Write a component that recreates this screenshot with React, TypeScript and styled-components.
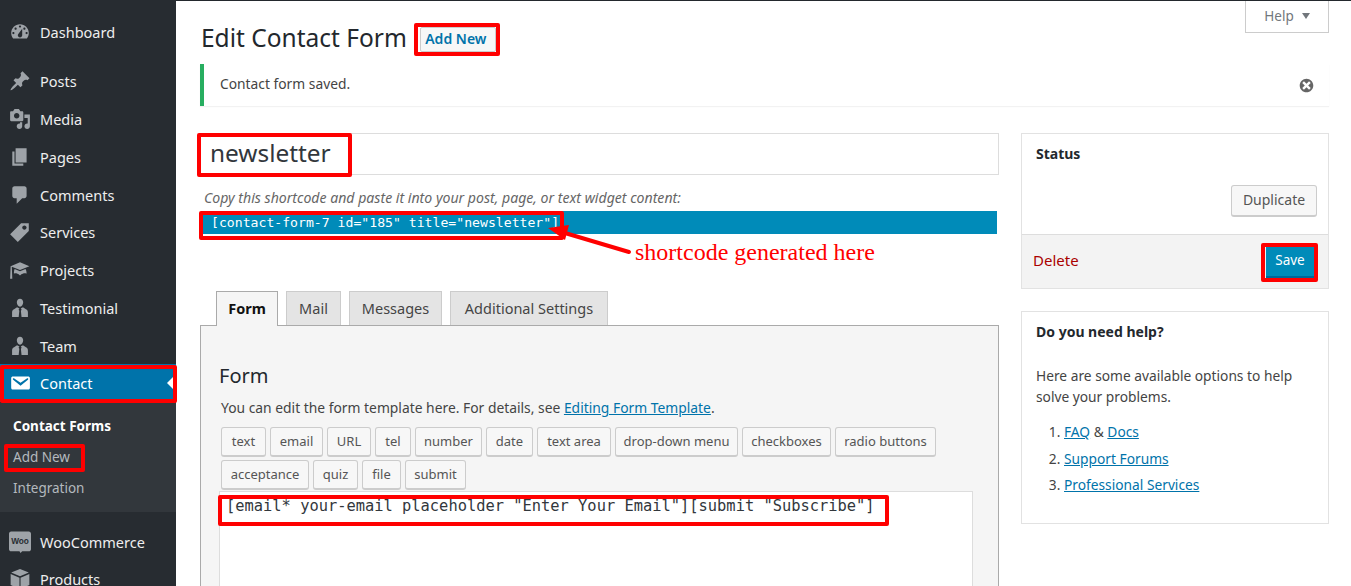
import { FC } from "react";
import styled, { createGlobalStyle } from "styled-components";

const UI_FONT = `"Noto Sans", "Open Sans", sans-serif`;
const MONO_FONT = `"DejaVu Sans Mono", "Liberation Mono", monospace`;

const GlobalStyle = createGlobalStyle`
  html, body {
    margin: 0;
    height: 100%;
    overflow: hidden;
    background: #fff;
  }
  * { box-sizing: border-box; }
  body {
    font-family: ${UI_FONT};
    font-size: 14px;
    color: #444;
  }
`;

const Page = styled.div`
  position: relative;
  display: flex;
  width: 1351px;
  height: 586px;
  overflow: hidden;
`;

/* sidebar */
const Sidebar = styled.nav`
  flex: 0 0 176px;
  height: 586px;
  overflow: hidden;
  background: #272c31;
  padding-top: 13px;
`;

const MenuItem = styled.div<{ $active?: boolean; $gap?: number }>`
  display: flex;
  align-items: center;
  height: 37.75px;
  padding-left: 9px;
  margin-top: ${(p) => p.$gap ?? 0}px;
  font-size: 14.5px;
  color: ${(p) => (p.$active ? "#fff" : "#eee")};
  background: ${(p) => (p.$active ? "#0073aa" : "transparent")};
  position: relative;
`;

const MenuLabel = styled.span`
  margin-left: 9px;
`;

const MenuIcon = styled.svg<{ $active?: boolean }>`
  width: 22px;
  height: 22px;
  flex: none;
  fill: ${(p) => (p.$active ? "#fff" : "#9ea3a8")};
`;

const ActiveCaret = styled.span`
  position: absolute;
  right: 3px;
  top: 50%;
  margin-top: -6px;
  border: 6px solid transparent;
  border-right-color: #fff;
  border-left-width: 0;
`;

const Submenu = styled.div`
  background: #32373c;
  height: 109px;
  margin-top: 1px;
  padding: 8px 0 0 13px;
  margin-bottom: 11px;
`;

const SubItem = styled.div<{ $current?: boolean }>`
  height: 31px;
  line-height: 31px;
  font-size: 13.5px;
  font-weight: ${(p) => (p.$current ? 700 : 400)};
  color: ${(p) => (p.$current ? "#fff" : "#b4b9be")};
`;

/* main column */
const Main = styled.main`
  flex: 1;
  border-top: 1px solid #23282d;
  padding: 0 22px 0 24px;
`;

const HeaderRow = styled.div`
  display: flex;
  align-items: flex-start;
  height: 63px;
`;

const Heading = styled.h1`
  margin: 21px 0 0 1px;
  font-size: 24.5px;
  line-height: 32px;
  font-weight: 400;
  color: #23282d;
`;

const AddNewButton = styled.a`
  margin: 26px 0 0 13px;
  width: 76px;
  height: 25px;
  padding-right: 4px;
  line-height: 21px;
  text-align: center;
  white-space: nowrap;
  font-size: 14px;
  font-weight: 600;
  color: #0073aa;
  background: #f7f7f7;
  border: 1px solid #ccc;
  border-radius: 2px;
`;

const HelpTab = styled.div`
  margin-left: auto;
  width: 84px;
  height: 32px;
  padding-bottom: 2px;
  display: flex;
  align-items: center;
  justify-content: center;
  gap: 8px;
  font-size: 13.5px;
  color: #72777c;
  border: 1px solid #ccc;
  border-top: 0;
`;

const HelpCaret = styled.span`
  border-style: solid;
  border-width: 6px 4px 0;
  border-color: #72777c transparent transparent;
`;

const Notice = styled.div`
  display: flex;
  align-items: center;
  justify-content: space-between;
  height: 42px;
  padding: 0 14px 0 16px;
  background: #fff;
  border-left: 4px solid #27ae60;
  box-shadow: 0 1px 1px rgba(0, 0, 0, 0.05);
`;

const NoticeText = styled.span`
  margin-bottom: 3px;
  font-size: 13.8px;
  color: #444;
`;

const DismissIcon = styled.svg`
  width: 17px;
  height: 17px;
  fill: #666;
`;

const Columns = styled.div`
  display: flex;
  gap: 22px;
  margin-top: 27px;
`;

const LeftColumn = styled.div`
  flex: 0 0 799px;
`;

const RightColumn = styled.div`
  flex: 0 0 308px;
`;

const TitleInput = styled.div`
  height: 42px;
  padding-left: 9px;
  line-height: 37px;
  font-size: 24.4px;
  color: #32373c;
  background: #fff;
  border: 1px solid #ddd;
`;

const ShortcodeHint = styled.p`
  margin: 13px 0 0 4px;
  height: 22px;
  line-height: 20px;
  font-size: 14.1px;
  font-style: italic;
  color: #666;
`;

const ShortcodeBar = styled.div`
  margin: 1px 2px 0;
  height: 23px;
  padding-left: 9px;
  line-height: 24px;
  font-family: ${MONO_FONT};
  font-size: 13.15px;
  color: #fff;
  background: #008bb9;
  white-space: pre;
`;

const Tabs = styled.div`
  display: flex;
  align-items: flex-start;
  gap: 8px;
  margin-top: 57px;
  padding-left: 16px;
  position: relative;
  z-index: 1;
`;

const Tab = styled.div<{ $active?: boolean; $width: number }>`
  width: ${(p) => p.$width}px;
  height: ${(p) => (p.$active ? 35 : 34)}px;
  line-height: 32px;
  text-align: center;
  font-size: 14.5px;
  font-weight: ${(p) => (p.$active ? 700 : 400)};
  color: ${(p) => (p.$active ? "#111" : "#444")};
  background: ${(p) => (p.$active ? "#f5f5f5" : "#e4e4e4")};
  border: 1px solid ${(p) => (p.$active ? "#aaa" : "#ccc")};
  border-bottom: 0;
`;

const Panel = styled.div`
  height: 300px;
  margin-top: -1px;
  padding: 36px 25px 0 18px;
  background: #f5f5f5;
  border: 1px solid #aaa;
`;

const PanelTitle = styled.h2`
  margin: 0;
  font-size: 20px;
  line-height: 28px;
  font-weight: 400;
  color: #23282d;
`;

const PanelText = styled.p`
  margin: 8px 0 0 2px;
  font-size: 13.85px;
  line-height: 20px;
  color: #444;
`;

const TextLink = styled.a`
  color: #0073aa;
  text-decoration: underline;
`;

const TagRow = styled.div`
  display: flex;
  flex-wrap: wrap;
  gap: 3px 4px;
  margin: 9px 0 0 2px;
  width: 730px;
`;

const TagButton = styled.span<{ $width: number }>`
  width: ${(p) => p.$width}px;
  height: 30px;
  line-height: 27px;
  text-align: center;
  font-size: 13px;
  color: #555;
  background: #f7f7f7;
  border: 1px solid #ccc;
  border-bottom-width: 2px;
  border-radius: 3px;
`;

const CodeArea = styled.div`
  height: 120px;
  margin-top: 1px;
  padding: 2px 0 0 6px;
  font-family: ${MONO_FONT};
  font-size: 15.4px;
  line-height: 24px;
  color: #32373c;
  background: #fff;
  border: 1px solid #ddd;
  white-space: pre;
`;

/* side boxes */
const SideBox = styled.section`
  background: #fff;
  border: 1px solid #e2e2e2;
  margin-bottom: 22px;
`;

const BoxTitle = styled.h3`
  margin: 0;
  font-size: 14px;
  line-height: 20px;
  font-weight: 700;
  color: #23282d;
`;

const StatusBody = styled.div`
  height: 100px;
  padding: 10px 11px 0 14px;
`;

const DuplicateRow = styled.div`
  display: flex;
  justify-content: flex-end;
  margin-top: 21px;
`;

const DuplicateButton = styled.span`
  width: 86px;
  height: 32px;
  line-height: 27px;
  text-align: center;
  font-size: 14px;
  color: #555;
  background: #f7f7f7;
  border: 1px solid #ccc;
  border-bottom-width: 2px;
  border-radius: 3px;
`;

const StatusFooter = styled.div`
  display: flex;
  align-items: center;
  justify-content: space-between;
  height: 54px;
  padding: 0 14px 0 11px;
  background: #f3f3f3;
  border-top: 1px solid #ddd;
`;

const DeleteLink = styled.span`
  margin-bottom: 3px;
  font-size: 15px;
  color: #a00;
`;

const SaveButton = styled.span`
  width: 48px;
  height: 33px;
  line-height: 31px;
  text-align: center;
  font-size: 13.5px;
  color: #fff;
  background: #008bb9;
  border-bottom: 2px solid #006799;
`;

const HelpBody = styled.div`
  height: 211px;
  padding: 10px 14px 0;
`;

const HelpText = styled.p`
  margin: 23px 0 0;
  font-size: 13.75px;
  line-height: 21px;
  color: #444;
`;

const HelpList = styled.ol`
  margin: 15px 0 0;
  padding-left: 28px;
  font-size: 13.75px;
  line-height: 20px;

  li {
    margin-bottom: 6.5px;
  }
`;

/* red annotations drawn on top of the screenshot */
const RedFrame = styled.div<{ $x: number; $y: number; $w: number; $h: number }>`
  position: absolute;
  left: ${(p) => p.$x}px;
  top: ${(p) => p.$y}px;
  width: ${(p) => p.$w}px;
  height: ${(p) => p.$h}px;
  border: 4px solid #f00;
  border-radius: 2px;
  pointer-events: none;
`;

const ArrowSvg = styled.svg`
  position: absolute;
  left: 545px;
  top: 220px;
  width: 95px;
  height: 40px;
`;

const CalloutText = styled.span`
  position: absolute;
  left: 635px;
  top: 238px;
  font-family: "Liberation Serif", serif;
  font-size: 24px;
  line-height: 28px;
  color: #f00;
  white-space: nowrap;
`;

const WooText = styled.text`
  font-family: "Liberation Sans", sans-serif;
  font-size: 7.5px;
  font-weight: 700;
  fill: #272c31;
`;

type IconProps = { d: string; active?: boolean };

const PathIcon: FC<IconProps> = ({ d, active }) => (
  <MenuIcon viewBox="0 0 20 20" $active={active}>
    <path d={d} fillRule="evenodd" />
  </MenuIcon>
);

const ICONS = {
  dashboard:
    "M3.76 16h12.48c1.1-1.37 1.76-3.11 1.76-5 0-4.42-3.58-8-8-8s-8 3.58-8 8c0 1.89.66 3.63 1.76 5zM10 4c.55 0 1 .45 1 1s-.45 1-1 1-1-.45-1-1 .45-1 1-1zM6 6c.55 0 1 .45 1 1s-.45 1-1 1-1-.45-1-1 .45-1 1-1zm8 0c.55 0 1 .45 1 1s-.45 1-1 1-1-.45-1-1 .45-1 1-1zm-5.37 5.55L12 7v6c0 1.1-.9 2-2 2s-2-.9-2-2c0-.57.24-1.08.63-1.45zM4 10c.55 0 1 .45 1 1s-.45 1-1 1-1-.45-1-1 .45-1 1-1zm12 0c.55 0 1 .45 1 1s-.45 1-1 1-1-.45-1-1 .45-1 1-1z",
  pin: "M10.44 3.02l1.82-1.82 6.36 6.35-1.83 1.82c-1.05-.68-2.48-.57-3.41.36l-.75.75c-.92.93-1.04 2.35-.35 3.41l-1.83 1.82-2.41-2.41-2.8 2.79c-.42.42-3.38 2.71-3.8 2.29s1.86-3.39 2.28-3.81l2.79-2.79L4.1 9.36l1.83-1.82c1.05.69 2.48.57 3.4-.36l.75-.75c.93-.92 1.05-2.35.36-3.41z",
  media:
    "M13 11V4c0-.55-.45-1-1-1h-1.67L9 1H5L3.67 3H2c-.55 0-1 .45-1 1v7c0 .55.45 1 1 1h10c.55 0 1-.45 1-1zM7 4.5c1.38 0 2.5 1.12 2.5 2.5S8.38 9.5 7 9.5 4.5 8.38 4.5 7 5.62 4.5 7 4.5zM14 6h5v10.5c0 1.38-1.12 2.5-2.5 2.5S14 17.88 14 16.5s1.12-2.5 2.5-2.5c.17 0 .34.02.5.05V9h-3V6zm-4 8.05V13h2v3.5c0 1.38-1.12 2.5-2.5 2.5S7 17.88 7 16.5 8.12 14 9.5 14c.17 0 .34.02.5.05z",
  pages: "M6 15V2h10v13H6zm-1 1h8v2H3V5h2v11z",
  comments:
    "M5 2h9c1.1 0 2 .9 2 2v7c0 1.1-.9 2-2 2h-2l-5 5v-5H5c-1.1 0-2-.9-2-2V4c0-1.1.9-2 2-2z",
  tag: "M11 2h7v7L8 19l-7-7zm3 6c1.1 0 2-.9 2-2s-.9-2-2-2-2 .9-2 2 .9 2 2 2z",
  learn:
    "M10 10L2.54 7.02 3 18H1l.48-11.41L10 3l8.52 3.59zm0 1.2l5-2.1c.7 1 1 2.5 1 4.1 0 0-3-1.2-6 1.8-3-3-5.5-1.8-5.5-1.8-.1-1.6.2-3.1.6-4.1z",
  person:
    "M10 1.500c1.700 0 2.900 1.400 2.900 3.300S11.700 8.900 10 8.900 7.100 6.700 7.100 4.800 8.300 1.500 10 1.500zM7.300 9.400l2.200 1-.8 1.100.7 1-.6 5.700H2.800v-4c0-1.300.5-2.400 1.800-3zM12.700 9.400l2.700 1.800c1.300.6 1.800 1.700 1.800 3v4h-5.800l-.6-5.700.7-1-.8-1.100z",
  email:
    "M3.87 4h13.25C18.37 4 19 4.59 19 5.79v8.42c0 1.19-.63 1.79-1.88 1.79H3.87c-1.25 0-1.88-.6-1.88-1.79V5.79c0-1.2.63-1.79 1.88-1.79zm6.62 8.6l6.74-5.53c.24-.2.43-.66.13-1.07-.29-.41-.82-.42-1.17-.17l-5.7 3.86L4.8 5.83c-.35-.25-.88-.24-1.17.17-.3.41-.11.87.13 1.07z",
  box: "M10 1l8 3.200-8 3.300-8-3.300zM1.500 5.500l8 3.300V19l-8-3.500zM18.500 5.500V15.500l-8 3.500V8.800z",
};

const WooIcon: FC = () => (
  <MenuIcon viewBox="0 0 20 20">
    <path d="M2 .5h16c1.100 0 2 .9 2 2v14c0 1.100-.9 2-2 2h-6l-1.500 1.500-1-1.500H2c-1.100 0-2-.9-2-2v-14c0-1.100.9-2 2-2z" />
    <WooText x="10" y="12" textAnchor="middle">
      Woo
    </WooText>
  </MenuIcon>
);

type TagItem = { label: string; width: number };

const TAGS: TagItem[] = [
  { label: "text", width: 45 },
  { label: "email", width: 53 },
  { label: "URL", width: 44 },
  { label: "tel", width: 36 },
  { label: "number", width: 67 },
  { label: "date", width: 47 },
  { label: "text area", width: 74 },
  { label: "drop-down menu", width: 123 },
  { label: "checkboxes", width: 89 },
  { label: "radio buttons", width: 101 },
  { label: "acceptance", width: 88 },
  { label: "quiz", width: 45 },
  { label: "file", width: 39 },
  { label: "submit", width: 61 },
];

const App: FC = () => {
  return (
    <Page>
      <GlobalStyle />
      <Sidebar>
        <MenuItem>
          <PathIcon d={ICONS.dashboard} />
          <MenuLabel>Dashboard</MenuLabel>
        </MenuItem>
        <MenuItem $gap={11.7}>
          <PathIcon d={ICONS.pin} />
          <MenuLabel>Posts</MenuLabel>
        </MenuItem>
        <MenuItem>
          <PathIcon d={ICONS.media} />
          <MenuLabel>Media</MenuLabel>
        </MenuItem>
        <MenuItem>
          <PathIcon d={ICONS.pages} />
          <MenuLabel>Pages</MenuLabel>
        </MenuItem>
        <MenuItem>
          <PathIcon d={ICONS.comments} />
          <MenuLabel>Comments</MenuLabel>
        </MenuItem>
        <MenuItem>
          <PathIcon d={ICONS.tag} />
          <MenuLabel>Services</MenuLabel>
        </MenuItem>
        <MenuItem>
          <PathIcon d={ICONS.learn} />
          <MenuLabel>Projects</MenuLabel>
        </MenuItem>
        <MenuItem>
          <PathIcon d={ICONS.person} />
          <MenuLabel>Testimonial</MenuLabel>
        </MenuItem>
        <MenuItem>
          <PathIcon d={ICONS.person} />
          <MenuLabel>Team</MenuLabel>
        </MenuItem>
        <MenuItem $active>
          <PathIcon d={ICONS.email} active />
          <MenuLabel>Contact</MenuLabel>
          <ActiveCaret />
        </MenuItem>
        <Submenu>
          <SubItem $current>Contact Forms</SubItem>
          <SubItem>Add New</SubItem>
          <SubItem>Integration</SubItem>
        </Submenu>
        <MenuItem>
          <WooIcon />
          <MenuLabel>WooCommerce</MenuLabel>
        </MenuItem>
        <MenuItem $gap={-1}>
          <PathIcon d={ICONS.box} />
          <MenuLabel>Products</MenuLabel>
        </MenuItem>
      </Sidebar>

      <Main>
        <HeaderRow>
          <Heading>Edit Contact Form</Heading>
          <AddNewButton>Add New</AddNewButton>
          <HelpTab>
            Help
            <HelpCaret />
          </HelpTab>
        </HeaderRow>

        <Notice>
          <NoticeText>Contact form saved.</NoticeText>
          <DismissIcon viewBox="0 0 20 20">
            <path d="M10 2c4.420 0 8 3.580 8 8s-3.580 8-8 8-8-3.580-8-8 3.580-8 8-8zm5 11l-3-3 3-3-2-2-3 3-3-3-2 2 3 3-3 3 2 2 3-3 3 3z" />
          </DismissIcon>
        </Notice>

        <Columns>
          <LeftColumn>
            <TitleInput>newsletter</TitleInput>
            <ShortcodeHint>
              Copy this shortcode and paste it into your post, page, or text widget content:
            </ShortcodeHint>
            <ShortcodeBar>[contact-form-7 id="185" title="newsletter"]</ShortcodeBar>

            <Tabs>
              <Tab $active $width={62}>
                Form
              </Tab>
              <Tab $width={55}>Mail</Tab>
              <Tab $width={93}>Messages</Tab>
              <Tab $width={158}>Additional Settings</Tab>
            </Tabs>
            <Panel>
              <PanelTitle>Form</PanelTitle>
              <PanelText>
                You can edit the form template here. For details, see{" "}
                <TextLink>Editing Form Template</TextLink>.
              </PanelText>
              <TagRow>
                {TAGS.map((tag) => (
                  <TagButton key={tag.label} $width={tag.width}>
                    {tag.label}
                  </TagButton>
                ))}
              </TagRow>
              <CodeArea>[email* your-email placeholder "Enter Your Email"][submit "Subscribe"]</CodeArea>
            </Panel>
          </LeftColumn>

          <RightColumn>
            <SideBox>
              <StatusBody>
                <BoxTitle>Status</BoxTitle>
                <DuplicateRow>
                  <DuplicateButton>Duplicate</DuplicateButton>
                </DuplicateRow>
              </StatusBody>
              <StatusFooter>
                <DeleteLink>Delete</DeleteLink>
                <SaveButton>Save</SaveButton>
              </StatusFooter>
            </SideBox>
            <SideBox>
              <HelpBody>
                <BoxTitle>Do you need help?</BoxTitle>
                <HelpText>Here are some available options to help solve your problems.</HelpText>
                <HelpList>
                  <li>
                    <TextLink>FAQ</TextLink> &amp; <TextLink>Docs</TextLink>
                  </li>
                  <li>
                    <TextLink>Support Forums</TextLink>
                  </li>
                  <li>
                    <TextLink>Professional Services</TextLink>
                  </li>
                </HelpList>
              </HelpBody>
            </SideBox>
          </RightColumn>
        </Columns>
      </Main>

      <RedFrame $x={0} $y={365} $w={177} $h={38} />
      <RedFrame $x={4} $y={444} $w={81} $h={28} />
      <RedFrame $x={414} $y={23} $w={86} $h={33} />
      <RedFrame $x={197} $y={133} $w={155} $h={44} />
      <RedFrame $x={199} $y={211} $w={365} $h={29} />
      <RedFrame $x={218} $y={495} $w={671} $h={31} />
      <RedFrame $x={1261} $y={243} $w={57} $h={39} />

      <ArrowSvg viewBox="0 0 95 40">
        <path d="M84 32 L20 13" stroke="#f00" strokeWidth="4" strokeLinecap="round" />
        <path d="M3 8 L24 5 L20 20 Z" fill="#f00" />
      </ArrowSvg>
      <CalloutText>shortcode generated here</CalloutText>
    </Page>
  );
};

export default App;
